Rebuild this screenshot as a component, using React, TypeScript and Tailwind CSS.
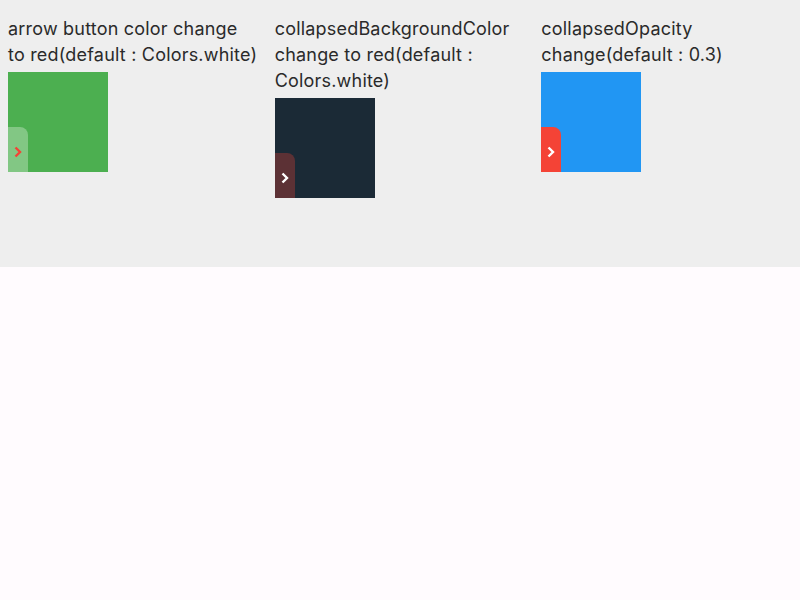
const cells = [
  {
    lines: ["arrow button color change", "to red(default : Colors.white)"],
    box: "bg-[#4caf50]",
    tab: "bg-white/30",
    arrow: "#f44336",
  },
  {
    lines: ["collapsedBackgroundColor", "change to red(default :", "Colors.white)"],
    box: "bg-[#1b2a36]",
    tab: "bg-[#f44336]/30",
    arrow: "#ffffff",
  },
  {
    lines: ["collapsedOpacity", "change(default : 0.3)"],
    box: "bg-[#2196f3]",
    tab: "bg-[#f44336]",
    arrow: "#ffffff",
  },
];

function Chevron({ color }: { color: string }) {
  return (
    <svg width="8" height="12" viewBox="0 0 8 12">
      <polyline
        points="1.5,1.5 6,6 1.5,10.5"
        fill="none"
        stroke={color}
        strokeWidth="2.4"
      />
    </svg>
  );
}

export default function App() {
  return (
    <div className="min-h-[600px] w-[800px] bg-[#fffbfe] font-['Inter',sans-serif]">
      <div className="grid grid-cols-3 bg-[#eeeeee]">
        {cells.map((c) => (
          <div key={c.lines[0]} className="aspect-square px-2 pt-[16px]">
            <p className="whitespace-nowrap text-[18px] leading-[26px] tracking-[0.2px] text-[#2a2a2a]">
              {c.lines.map((l) => (
                <span key={l} className="block">
                  {l}
                </span>
              ))}
            </p>
            <div className={`mt-[4px] flex h-[100px] w-[100px] items-end ${c.box}`}>
              <div
                className={`flex h-[45px] w-5 items-center justify-center rounded-tr-lg pt-[5px] ${c.tab}`}
              >
                <Chevron color={c.arrow} />
              </div>
            </div>
          </div>
        ))}
      </div>
    </div>
  );
}
